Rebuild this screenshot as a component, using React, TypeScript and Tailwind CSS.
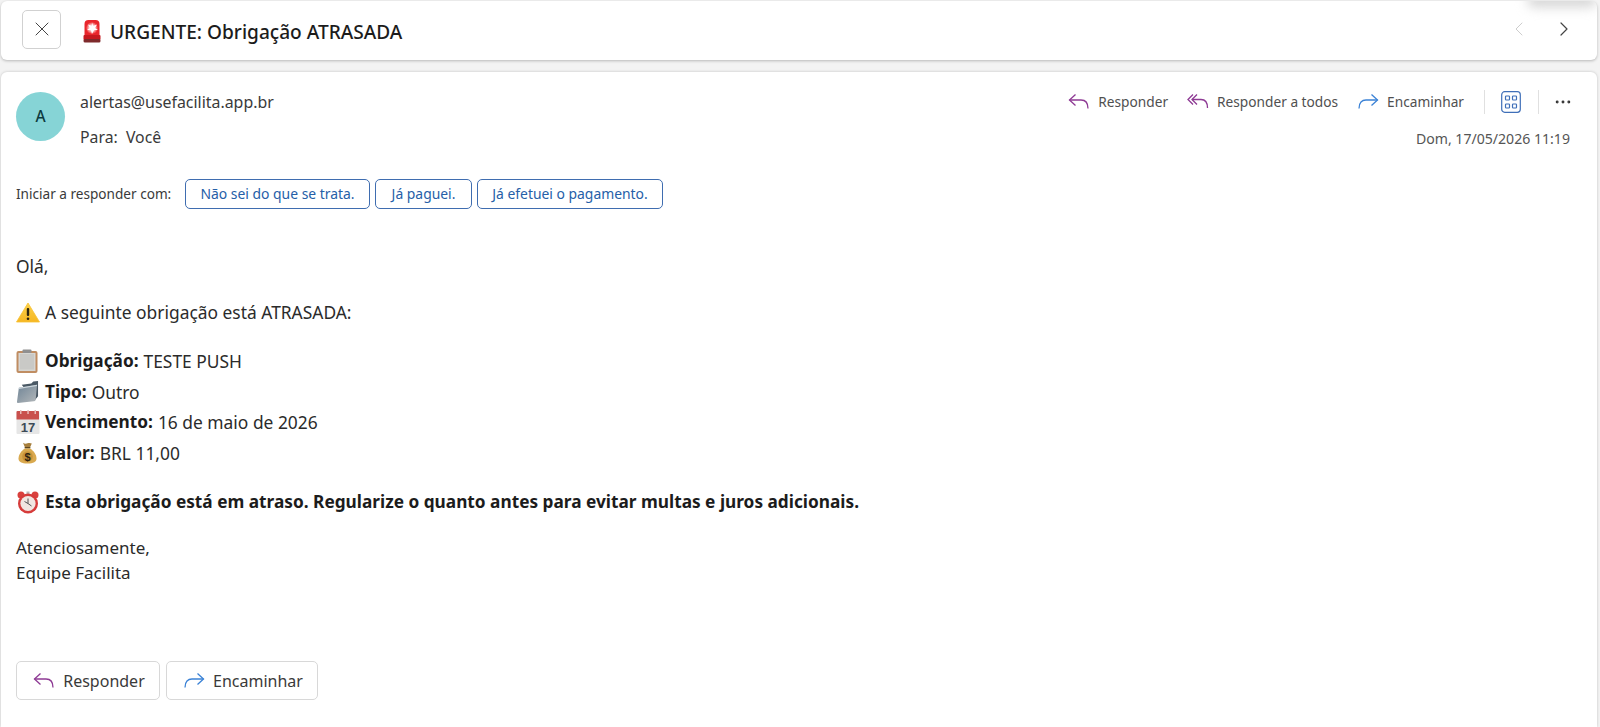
import type { ReactNode } from "react";
import { X, ChevronLeft, ChevronRight, MoreHorizontal } from "lucide-react";

const ReplyIcon = ({ className = "" }: { className?: string }) => (
  <svg viewBox="0 0 22 20" className={className} fill="none" stroke="#8e3a94" strokeWidth="1.3">
    <path d="M7.5 2.5 1.5 8l6 5.5" />
    <path d="M1.5 8H13c4 0 7 2.600 7 8.500" />
  </svg>
);

const ReplyAllIcon = ({ className = "" }: { className?: string }) => (
  <svg viewBox="0 0 22 20" className={className} fill="none" stroke="#8e3a94" strokeWidth="1.3">
    <path d="M6 2.500 1 7.500l5 5" />
    <path d="M10 2.500 5 7.500l5 5" />
    <path d="M5 7.500h9c4 0 6.500 2.800 6.500 8.500" />
  </svg>
);

const ForwardIcon = ({ className = "" }: { className?: string }) => (
  <svg viewBox="0 0 22 20" className={className} fill="none" stroke="#3b82d6" strokeWidth="1.3">
    <path d="M14.500 2.500 20.500 8l-6 5.500" />
    <path d="M20.500 8H9c-4 0-7 2.600-7 8.500" />
  </svg>
);

const AppsIcon = () => (
  <svg viewBox="0 0 20 22" className="w-[20px] h-[22px]" fill="none" stroke="#3f6fb8" strokeWidth="1.200">
    <rect x="0.700" y="0.700" width="18.600" height="20.600" rx="3" />
    <rect x="4.500" y="5" width="4" height="4" rx="0.800" />
    <rect x="11.500" y="5" width="4" height="4" rx="0.800" />
    <rect x="4.500" y="13" width="4" height="4" rx="0.800" />
    <rect x="11.500" y="13" width="4" height="4" rx="0.800" />
  </svg>
);

const Siren = () => (
  <svg viewBox="0 0 18 24" className="w-[18px] h-[24px]">
    <defs>
      <radialGradient id="sirenGlow" cx="0.500" cy="0.500" r="0.500">
        <stop offset="0" stopColor="#ffffff" />
        <stop offset="0.450" stopColor="#ffd5d5" />
        <stop offset="1" stopColor="#ee2b30" />
      </radialGradient>
    </defs>
    <path d="M1.500 17V5a4 4 0 0 1 4-4h7a4 4 0 0 1 4 4v12z" fill="#e8262c" />
    <circle cx="9" cy="9" r="6" fill="url(#sirenGlow)" />
    <path d="M9 3.500l1.200 3.600 3.800-1.500-2 3.300 3 2-3.900.200L9 15l-1.100-3.900-3.900-.200 3-2-2-3.300 3.800 1.500z" fill="#ffffff" />
    <rect x="0.500" y="16" width="17" height="5" rx="1" fill="#c6191f" />
    <rect x="0.500" y="20" width="17" height="3.500" rx="1.500" fill="#7e2a2c" />
  </svg>
);

const Warning = () => (
  <svg viewBox="0 0 24 21" className="w-[24px] h-[21px]">
    <defs>
      <linearGradient id="warnFill" x1="0" y1="0" x2="0" y2="1">
        <stop offset="0" stopColor="#fbd24b" />
        <stop offset="1" stopColor="#f6b622" />
      </linearGradient>
    </defs>
    <path d="M12 1 23.500 20H.500z" fill="url(#warnFill)" stroke="#f8c232" strokeWidth="0.800" strokeLinejoin="round" />
    <rect x="10.800" y="6" width="2.400" height="8" rx="1.100" fill="#2c2410" />
    <circle cx="12" cy="16.800" r="1.300" fill="#2c2410" />
  </svg>
);

const Clipboard = () => (
  <svg viewBox="0 0 22 24" className="w-[22px] h-[24px]">
    <rect x="0.500" y="2" width="21" height="22" rx="2" fill="#c08d62" />
    <rect x="2.500" y="4" width="17" height="18" fill="#d6d6d3" />
    <rect x="4" y="5" width="14" height="15.500" fill="#c9c9c6" />
    <rect x="6.500" y="0.500" width="9" height="3.500" rx="1" fill="#909090" />
  </svg>
);

const Folder = () => (
  <svg viewBox="0 0 24 25" className="w-[23px] h-[24px]">
    <defs>
      <linearGradient id="folderFront" x1="0" y1="0" x2="1" y2="1">
        <stop offset="0" stopColor="#6f8496" />
        <stop offset="1" stopColor="#b4b8ba" />
      </linearGradient>
    </defs>
    <path d="M6 5 16 3.500 18 1.500l5-.500v16l-4 5z" fill="#4a5864" />
    <path d="M3 8 22 5l-1.500 15.500a2 2 0 0 1-2 1.700L2 24a1 1 0 0 1-1-1z" fill="url(#folderFront)" />
    <path d="M3 8 22 5l-.150 1.300L2.900 9.300z" fill="#cdd6dc" />
  </svg>
);

const Calendar = () => (
  <svg viewBox="0 0 24 24" className="w-[24px] h-[24px]">
    <rect x="0.500" y="1" width="23" height="23" rx="1" fill="#e6e6e6" />
    <path d="M0.500 2a1 1 0 0 1 1-1h21a1 1 0 0 1 .500 1v7.500H0.500z" fill="#c9504d" />
    <rect x="4" y="0" width="1.500" height="4" fill="#e8b9b7" />
    <rect x="11.300" y="0" width="1.500" height="4" fill="#e8b9b7" />
    <rect x="18.500" y="0" width="1.500" height="4" fill="#e8b9b7" />
    <text x="12" y="22" textAnchor="middle" fontSize="13" fontWeight="600" fontFamily="Liberation Sans, sans-serif" fill="#3d4a56">17</text>
  </svg>
);

const MoneyBag = () => (
  <svg viewBox="0 0 19 22" className="ml-[2px] w-[19px] h-[22px]">
    <path d="M5 .800c1.500 1 3 1.200 4.500.500 1.500-.600 3-.500 4.300.200L12 5.500H7z" fill="#a67f3d" />
    <rect x="6.500" y="5" width="6" height="1.600" rx="0.800" fill="#5b4520" />
    <path d="M6.800 6.500C3 9 .500 13 .500 16.500c0 3.500 3 5 9 5s9-1.500 9-5c0-3.500-2.500-7.500-6.300-10z" fill="#d9a94f" />
    <circle cx="9.500" cy="14.500" r="5.300" fill="#c7933a" />
    <text x="9.500" y="18.500" textAnchor="middle" fontSize="11" fontWeight="700" fontFamily="Liberation Sans, sans-serif" fill="#2e2310">$</text>
  </svg>
);

const AlarmClock = () => (
  <svg viewBox="0 0 22 23" className="ml-[1px] w-[22px] h-[23px]">
    <circle cx="4" cy="4" r="3.500" fill="#d9413d" />
    <circle cx="18" cy="4" r="3.500" fill="#d9413d" />
    <rect x="9.500" y="0.500" width="3" height="2.500" fill="#b9b9b9" />
    <circle cx="11" cy="12.500" r="10" fill="#d63c3b" />
    <circle cx="11" cy="12.500" r="7.600" fill="#f1e7e2" />
    <path d="M11 7.500v5l-3.500-2M11 12.500l3.500 2.500" fill="none" stroke="#555" strokeWidth="1" />
  </svg>
);

const Action = ({ icon, label }: { icon: ReactNode; label: string }) => (
  <div className="flex items-center gap-[8px]">
    {icon}
    <span className="text-[13.7px] text-[#505050]">{label}</span>
  </div>
);

const Row = ({ icon, label, value }: { icon: ReactNode; label: string; value: string }) => (
  <div className="flex items-center h-[30.500px]">
    <span className="w-[29px] flex items-center shrink-0">{icon}</span>
    <span className="font-bold text-[17.250px] text-[#1c1c1c]">{label}</span>
    <span className="ml-[5px]">{value}</span>
  </div>
);

const Suggestion = ({ children, width }: { children: ReactNode; width: string }) => (
  <button className={`h-[30px] rounded-[5px] border border-[#3f6db0] text-[13.9px] text-[#2560a8] ${width}`}>
    {children}
  </button>
);

export default function App() {
  return (
    <div className="h-[727px] overflow-hidden bg-[#f3f3f3] pt-[1px] pl-[1px] pr-[3px] flex flex-col gap-[12px] text-[#2b2b2b] font-['Noto_Sans',sans-serif]">
      <header className="relative overflow-hidden h-[59px] shrink-0 bg-white rounded-[6px] shadow-[0_1px_3px_rgba(0,0,0,0.25)] flex items-center pl-[21px] pr-[22px]">
        <div className="absolute -top-[8px] right-0 w-[70px] h-[14px] rounded-full bg-[#d4d4d4] blur-[6px]" />
        <button className="-mt-[3px] w-[39px] h-[39px] rounded-[5px] border border-[#d1d1d1] flex items-center justify-center">
          <X className="w-[24px] h-[24px] text-[#444]" strokeWidth={1} />
        </button>
        <span className="ml-[22px] mr-[9px] flex"><Siren /></span>
        <h1 className="mt-[4px] text-[19.100px] font-medium text-[#1c1c1c] flex-1">URGENTE: Obrigação ATRASADA</h1>
        <ChevronLeft className="-mt-[3px] w-[24px] h-[24px] text-[#cdcdcd]" strokeWidth={1} />
        <ChevronRight className="-mt-[3px] ml-[21px] -mr-[1px] w-[24px] h-[24px] text-[#444]" strokeWidth={1.200} />
      </header>

      <main className="flex-1 bg-white rounded-t-[6px] shadow-[0_0_3px_rgba(0,0,0,0.2)] pl-[15px] pr-[26px] pt-[20px]">
        <div className="flex justify-between h-[59px]">
          <div className="flex">
            <div className="w-[49px] h-[49px] rounded-full bg-[#86d4d6] flex items-center justify-center text-[15.500px] font-medium text-[#0d3b3e]">A</div>
            <div className="ml-[15px] -mt-[1px] flex flex-col text-[#3a3a3a]">
              <span className="text-[15.900px] h-[22px] leading-[22px]">alertas@usefacilita.app.br</span>
              <span className="text-[15.800px] mt-[13px] h-[22px] leading-[22px]">Para:&nbsp; Você</span>
            </div>
          </div>
          <div className="flex flex-col items-end">
            <div className="flex items-center h-[24px] -mt-[2px]">
              <Action icon={<ReplyIcon className="w-[22px] h-[20px]" />} label="Responder" />
              <div className="w-[19px]" />
              <Action icon={<ReplyAllIcon className="w-[22px] h-[20px]" />} label="Responder a todos" />
              <div className="w-[19px]" />
              <Action icon={<ForwardIcon className="w-[22px] h-[20px]" />} label="Encaminhar" />
              <div className="ml-[20px] w-px h-[24px] bg-[#e0e0e0]" />
              <div className="ml-[16px] flex"><AppsIcon /></div>
              <div className="ml-[17px] w-px h-[24px] bg-[#e0e0e0]" />
              <MoreHorizontal className="ml-[14px] -mr-[2px] w-[20px] h-[20px] text-[#333]" strokeWidth={1.500} />
            </div>
            <span className="mt-[14px] mr-[1px] text-[14.100px] text-[#555]">Dom, 17/05/2026 11:19</span>
          </div>
        </div>

        <div className="flex items-center mt-[28px] h-[30px]">
          <span className="text-[13.600px] w-[169px] text-[#3a3a3a]">Iniciar a responder com:</span>
          <div className="flex gap-[5px]">
            <Suggestion width="w-[185px]">Não sei do que se trata.</Suggestion>
            <Suggestion width="w-[97px]">Já paguei.</Suggestion>
            <Suggestion width="w-[186px]">Já efetuei o pagamento.</Suggestion>
          </div>
        </div>

        <div className="mt-[44px] text-[17.400px] text-[#2b2b2b]">
          <div className="h-[26px] leading-[26px]">Olá,</div>
          <div className="mt-[20px] h-[26px] flex items-center">
            <span className="w-[29px] flex"><Warning /></span>
            A seguinte obrigação está ATRASADA:
          </div>
          <div className="mt-[21px]">
            <Row icon={<Clipboard />} label="Obrigação:" value="TESTE PUSH" />
            <Row icon={<Folder />} label="Tipo:" value="Outro" />
            <Row icon={<Calendar />} label="Vencimento:" value="16 de maio de 2026" />
            <Row icon={<MoneyBag />} label="Valor:" value="BRL 11,00" />
          </div>
          <div className="mt-[20px] h-[28px] flex items-center font-bold text-[17.250px] text-[#1c1c1c]">
            <span className="w-[29px] flex"><AlarmClock /></span>
            Esta obrigação está em atraso. Regularize o quanto antes para evitar multas e juros adicionais.
          </div>
          <div className="mt-[19px] h-[25px] leading-[25px] text-[17px]">Atenciosamente,</div>
          <div className="h-[25px] leading-[25px] text-[17px]">Equipe Facilita</div>
        </div>

        <div className="mt-[76px] flex gap-[6px]">
          <button className="w-[144px] h-[39px] rounded-[5px] border border-[#d8d8d8] flex items-center justify-center gap-[8px] pl-[2px] text-[16px] text-[#3a3a3a]">
            <ReplyIcon className="w-[22px] h-[20px]" />Responder
          </button>
          <button className="w-[152px] h-[39px] rounded-[5px] border border-[#d8d8d8] flex items-center justify-center gap-[8px] pl-[2px] text-[16px] text-[#3a3a3a]">
            <ForwardIcon className="w-[22px] h-[20px]" />Encaminhar
          </button>
        </div>
      </main>
    </div>
  );
}
